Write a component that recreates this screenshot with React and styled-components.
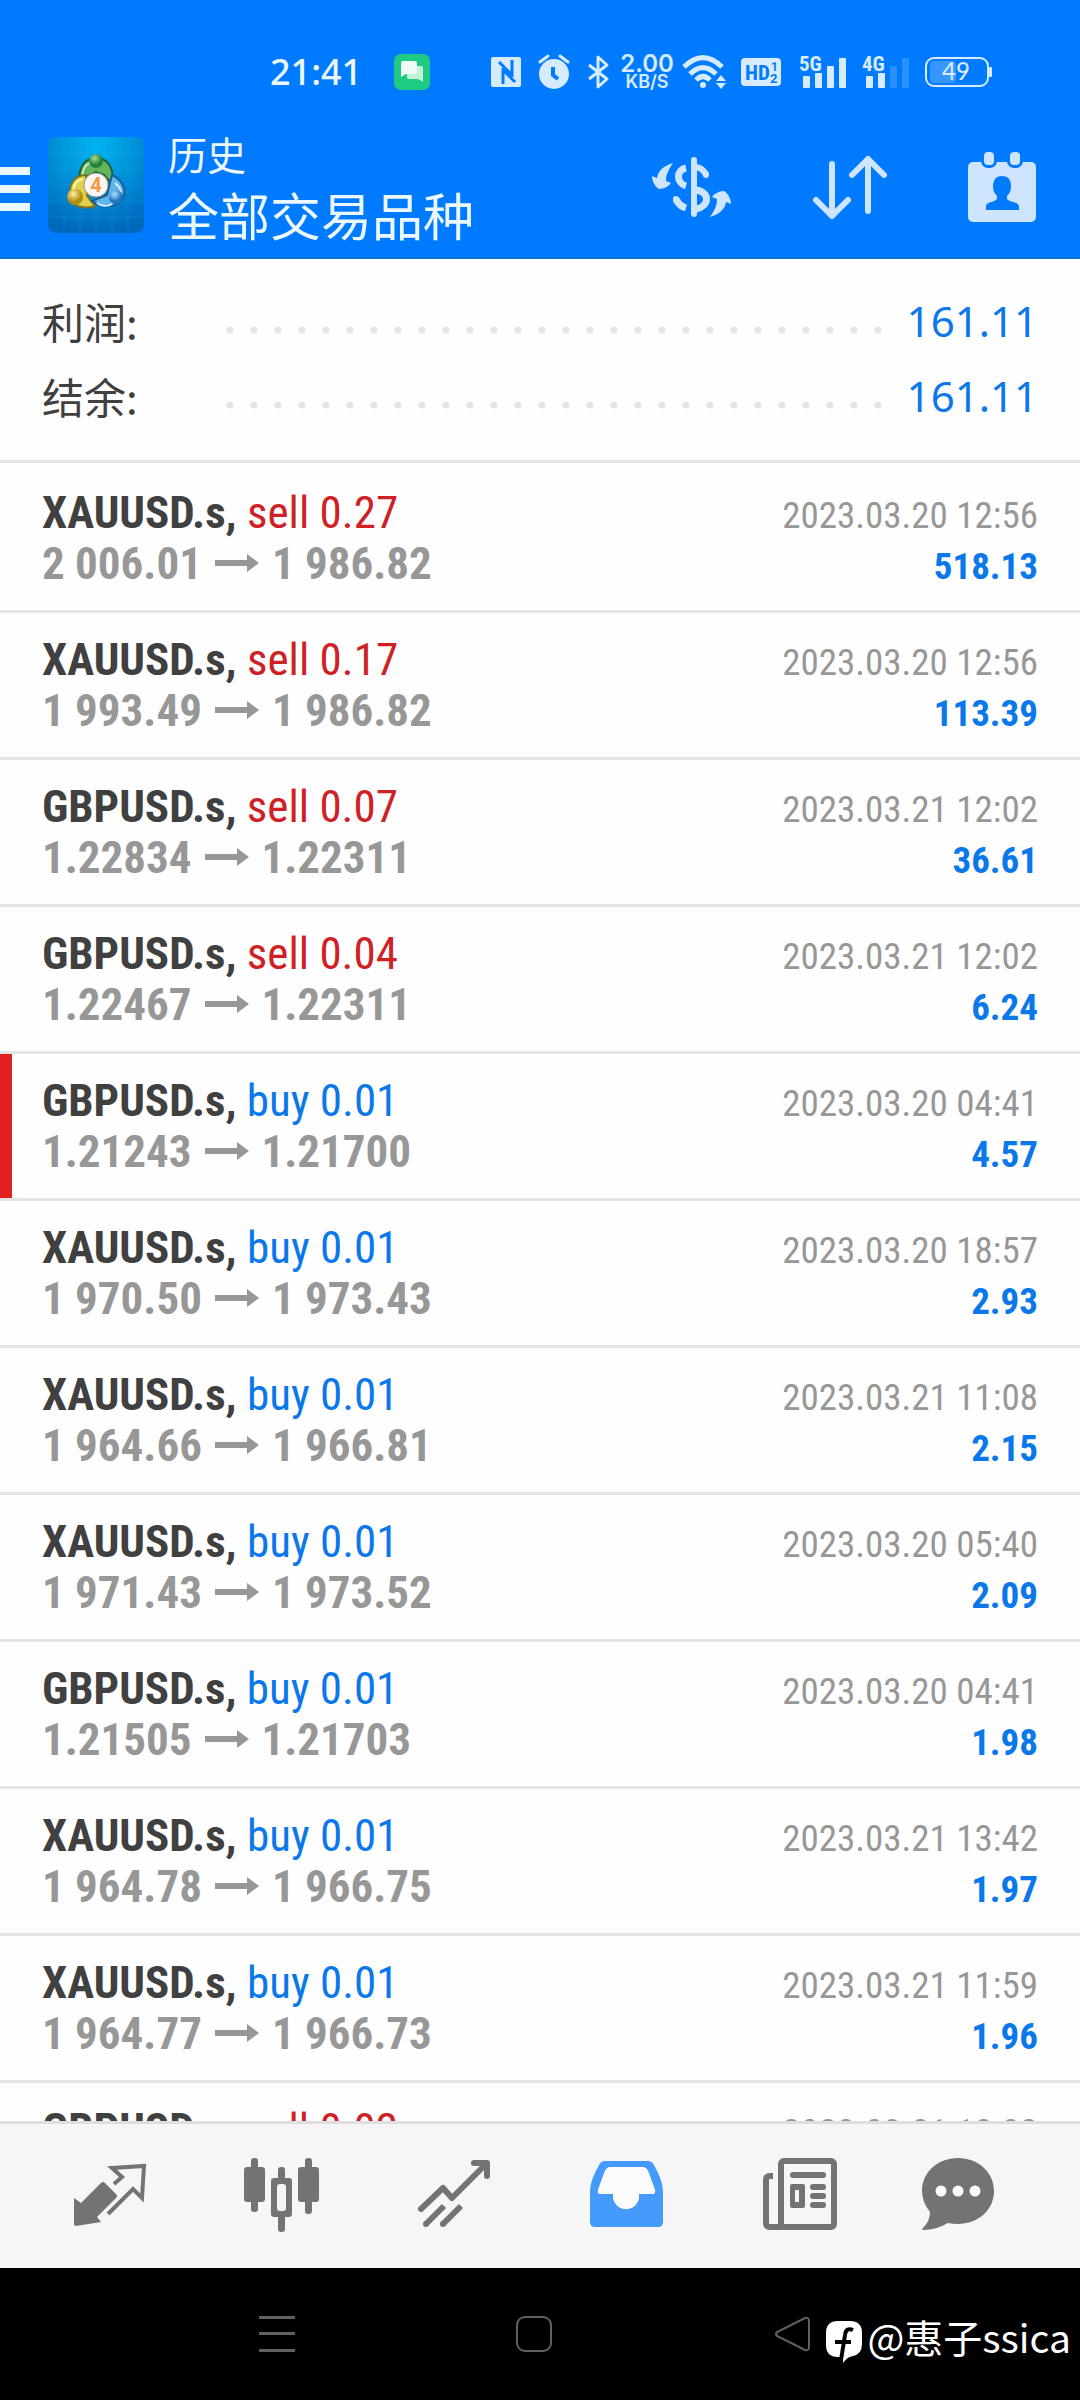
import React from 'react';
import styled, { createGlobalStyle } from 'styled-components';

const colors = {
  bar: '#007aff',
  icon: '#cfe4ff',
  buy: '#0a78ea',
  sell: '#cf2026',
  dark: '#404040',
  grey: '#979797',
  line: '#e4e4e4',
  tab: '#737373',
};

const deals = [
  { symbol: 'XAUUSD.s', side: 'sell', volume: '0.27', open: '2 006.01', close: '1 986.82', time: '2023.03.20 12:56', profit: '518.13' },
  { symbol: 'XAUUSD.s', side: 'sell', volume: '0.17', open: '1 993.49', close: '1 986.82', time: '2023.03.20 12:56', profit: '113.39' },
  { symbol: 'GBPUSD.s', side: 'sell', volume: '0.07', open: '1.22834', close: '1.22311', time: '2023.03.21 12:02', profit: '36.61' },
  { symbol: 'GBPUSD.s', side: 'sell', volume: '0.04', open: '1.22467', close: '1.22311', time: '2023.03.21 12:02', profit: '6.24' },
  { symbol: 'GBPUSD.s', side: 'buy', volume: '0.01', open: '1.21243', close: '1.21700', time: '2023.03.20 04:41', profit: '4.57', marked: true },
  { symbol: 'XAUUSD.s', side: 'buy', volume: '0.01', open: '1 970.50', close: '1 973.43', time: '2023.03.20 18:57', profit: '2.93' },
  { symbol: 'XAUUSD.s', side: 'buy', volume: '0.01', open: '1 964.66', close: '1 966.81', time: '2023.03.21 11:08', profit: '2.15' },
  { symbol: 'XAUUSD.s', side: 'buy', volume: '0.01', open: '1 971.43', close: '1 973.52', time: '2023.03.20 05:40', profit: '2.09' },
  { symbol: 'GBPUSD.s', side: 'buy', volume: '0.01', open: '1.21505', close: '1.21703', time: '2023.03.20 04:41', profit: '1.98' },
  { symbol: 'XAUUSD.s', side: 'buy', volume: '0.01', open: '1 964.78', close: '1 966.75', time: '2023.03.21 13:42', profit: '1.97' },
  { symbol: 'XAUUSD.s', side: 'buy', volume: '0.01', open: '1 964.77', close: '1 966.73', time: '2023.03.21 11:59', profit: '1.96' },
  { symbol: 'GBPUSD.s', side: 'sell', volume: '0.02', open: '1.22401', close: '1.22303', time: '2023.03.21 12:02', profit: '1.96' },
];

const totals = [
  { label: '利润:', value: '161.11' },
  { label: '结余:', value: '161.11' },
];

const Icon = ({ w, h, children }) => (
  <Svg width={w} height={h} viewBox={`0 0 ${w} ${h}`} fill='currentColor' aria-hidden='true'>
    {children}
  </Svg>
);

const ChatBadge = () => (
  <Icon w={36} h={36}>
    <rect width='36' height='36' rx='7' fill='#1fcb80' />
    <path d='M13 12h14a2 2 0 0 1 2 2v14l-5-3H15a2 2 0 0 1-2-2z' fill='#c4f2dc' />
    <path d='M9 7h12a2 2 0 0 1 2 2v9a2 2 0 0 1-2 2H12l-5 3V9a2 2 0 0 1 2-2z' fill='#eefcf5' />
  </Icon>
);

const Nfc = () => (
  <Icon w={37} h={32}>
    <rect y='1' width='30' height='30' rx='2' />
    <path d='M12 28V12M8 6l13 13M21 4v17M12 14l12 12' fill='none' stroke={colors.bar} strokeWidth='3' />
  </Icon>
);

const Alarm = () => (
  <Icon w={40} h={34}>
    <circle cx='16' cy='19' r='15' />
    <path d='M2 7l8-6M30 7l-8-6' stroke='currentColor' strokeWidth='3' strokeLinecap='round' />
    <path d='M15 12v8l5 4' fill='none' stroke={colors.bar} strokeWidth='4' />
  </Icon>
);

const Bluetooth = () => (
  <Icon w={24} h={34}>
    <path d='M1 10l18 14-9 8V2l9 8L1 24' fill='none' stroke='currentColor' strokeWidth='3' strokeLinejoin='round' />
  </Icon>
);

const Wifi = () => (
  <Icon w={49} h={36}>
    <g fill='none' stroke='currentColor' strokeWidth='5'>
      <path d='M2 13Q21-6 40 13' />
      <path d='M8 20Q21 7 34 20' />
      <path d='M14 26Q21 19 28 26' />
    </g>
    <circle cx='21' cy='31' r='3' />
    <path d='M34 27l5-6 5 6zM34 29l5 6 5-6z' />
  </Icon>
);

const Hd = () => (
  <Icon w={49} h={30}>
    <rect y='1' width='40' height='28' rx='4' />
    <g fill={colors.bar} fontFamily='Roboto, sans-serif' fontWeight='700'>
      <text x='4' y='23' fontSize='21' fontFamily='"Roboto Condensed", Roboto, sans-serif'>HD</text>
      <text x='30' y='14' fontSize='12'>1</text>
      <text x='29' y='26' fontSize='13'>2</text>
    </g>
  </Icon>
);

const Signal = ({ w, label, bars }) => (
  <Icon w={w} h={34}>
    <text x='-1' y='16' fontSize='21' fontWeight='700' fontFamily='"Roboto Condensed", Roboto, sans-serif'>{label}</text>
    {[12, 15, 22, 30].map((size, index) => (
      <rect key={size} x={3 + index * 12} y={33 - size} width='7' height={size} rx='1' opacity={index < bars ? 1 : .2} />
    ))}
  </Icon>
);

const Battery = () => (
  <Icon w={67} h={32}>
    <rect x='5' y='5' width='26' height='22' rx='4' opacity='.25' />
    <rect x='1' y='2' width='62' height='28' rx='8' fill='none' stroke='currentColor' strokeWidth='2' />
    <rect x='64' y='11' width='3' height='10' rx='1' />
    <text x='31' y='24' fontSize='24' fontWeight='500' textAnchor='middle' fontFamily='Lato, sans-serif'>49</text>
  </Icon>
);

const AppLogo = () => (
  <Icon w={96} h={96}>
    <defs>
      <radialGradient id='sky' cx='.5' cy='.1' r='.9'>
        <stop offset='0' stopColor='#00b4f0' />
        <stop offset='1' stopColor='#0068bd' />
      </radialGradient>
      <radialGradient id='green' cx='.4' cy='.3'>
        <stop offset='0' stopColor='#a5dc95' />
        <stop offset='1' stopColor='#23803a' />
      </radialGradient>
      <radialGradient id='gold' cx='.4' cy='.3'>
        <stop offset='0' stopColor='#fff0a0' />
        <stop offset='1' stopColor='#b08d10' />
      </radialGradient>
      <radialGradient id='blue' cx='.4' cy='.3'>
        <stop offset='0' stopColor='#b5e2fb' />
        <stop offset='1' stopColor='#1b74bd' />
      </radialGradient>
    </defs>
    <rect width='96' height='96' rx='8' fill='url(#sky)' />
    <path d='M16 0v96M32 0v96M48 0v96M64 0v96M80 0v96M0 16h96M0 32h96M0 48h96M0 64h96M0 80h96' stroke='#35b8ee' strokeOpacity='.2' />
    <path d='M32 47C29 29 38 21 48 21s19 8 16 26l-8-9-8-3-8 4z' fill='#64b35d' stroke='#1f6038' strokeWidth='2' />
    <path d='M35 42C33 31 39 25 48 25' fill='none' stroke='#c4ebba' strokeWidth='2' />
    <path d='M38 38c-11 0-17 9-16 19 1 12 12 16 25 12l-8-10z' fill='#dfd04a' stroke='#7d7420' strokeWidth='2' />
    <path d='M26 56c-2-8 3-13 9-14' fill='none' stroke='#fff8b5' strokeWidth='2' />
    <path d='M64 38c9 4 14 13 12 20-3 12-20 15-32 6l15-6z' fill='#60b5ea' stroke='#175d96' strokeWidth='2' />
    <path d='M67 46c5 4 7 9 5 13M49 66c4 3 10 4 15 1' fill='none' stroke='#d2effd' strokeWidth='2' />
    <circle cx='48' cy='24' r='7' fill='url(#green)' />
    <circle cx='27' cy='60' r='8' fill='url(#gold)' />
    <circle cx='68' cy='60' r='7' fill='url(#blue)' />
    <circle cx='48' cy='48' r='12' fill='#fbf6f2' stroke='#9a9a8c' />
    <text x='48' y='55' fontSize='20' fontWeight='700' textAnchor='middle' fill='#f2994c' fontFamily='Roboto, sans-serif'>4</text>
  </Icon>
);

const Currency = () => (
  <Icon w={80} h={64}>
    <g fill='none' stroke='currentColor' strokeWidth='6'>
      <path d='M42 5v54' strokeLinecap='round' />
      <path d='M34 13C24 15 24 28 34 31' strokeWidth='7' />
      <path d='M44 12q7 1 10 8' />
      <path d='M44 35C58 37 58 51 44 54' strokeWidth='7' />
      <path d='M34 53q-7-2-10-9' strokeWidth='7' />
      <path d='M54 19v1M24 44v1' strokeLinecap='round' />
    </g>
    <path id='swap' d='M21 8C11 11 6 16 5 23L0 21C0 26 3 32 7 34C12 34 17 31 19 28L14 26C14 19 17 14 21 8Z' />
    <use href='#swap' transform='rotate(180 39.5 35)' />
  </Icon>
);

const Sort = () => (
  <Icon w={76} h={64}>
    <path d='M20 9v51M4 45l16 16 16-16M56 56V4M40 20L56 4l16 16' fill='none' stroke='currentColor' strokeWidth='6' strokeLinecap='round' strokeLinejoin='round' />
  </Icon>
);

const Calendar = () => (
  <Icon w={68} h={70}>
    <rect y='10' width='68' height='60' rx='5' />
    <rect x='13' y='-4' width='16' height='20' rx='7' fill={colors.bar} />
    <rect x='39' y='-4' width='16' height='20' rx='7' fill={colors.bar} />
    <rect x='16' y='0' width='10' height='13' rx='4' />
    <rect x='42' y='0' width='10' height='13' rx='4' />
    <path d='M34 24c6 0 9 4 9 10 0 4-1 7-4 10v3c3 4 12 2 12 8v3H18v-3c0-6 8-4 11-8v-3c-3-3-4-6-4-10 0-6 3-10 9-10z' fill={colors.bar} />
  </Icon>
);

const Quotes = () => (
  <Icon w={80} h={80}>
    <path d='M44 28l8-7-10-9 32-2-2 32-9-9-25 25' fill='none' stroke='currentColor' strokeWidth='4' />
    <path d='M4 42l7 5 20-20q2-2 4 0l11 11q2 2 0 4L27 61l4 5-25 4q-2 0-2-2z' />
  </Icon>
);

const Charts = () => (
  <Icon w={80} h={80}>
    <rect x='2' y='11' width='21' height='35' rx='3' />
    <rect x='9' y='2' width='7' height='54' rx='3' />
    <rect x='56' y='11' width='21' height='35' rx='3' />
    <rect x='63' y='2' width='7' height='56' rx='3' />
    <rect x='36' y='11' width='7' height='65' rx='3' />
    <rect x='29' y='22' width='21' height='39' rx='3' />
    <rect x='35' y='28' width='9' height='27' rx='3' fill='#f6f6f6' />
  </Icon>
);

const Trade = () => (
  <Icon w={80} h={80}>
    <g fill='none' stroke='currentColor' strokeWidth='6' strokeLinejoin='round'>
      <path d='M7 53l22-21 9 10L72 8M60 7h13v13' strokeLinecap='round' />
      <path d='M12 68l18-18M29 68l18-18' />
      <path d='M12 68h0M29 68h0' strokeLinecap='round' />
    </g>
  </Icon>
);

const History = () => (
  <Icon w={80} h={80}>
    <path fillRule='evenodd' d='M19 5h43q4 0 6 4c5 9 9 18 9 27v30q0 5-5 5H9q-5 0-5-5V36c0-9 4-18 9-27q2-4 6-4zM25 11q-4 0-6 4l-7 19q-1 4 3 4h12v2a13 13 0 0 0 26 0v-2h13q4 0 3-4l-7-19q-2-4-6-4z' />
    <path d='M25 11q-4 0-6 4l-7 19q-1 4 3 4h12v2a13 13 0 0 0 26 0v-2h13q4 0 3-4l-7-19q-2-4-6-4z' fill='#fbfbfb' />
  </Icon>
);

const News = () => (
  <Icon w={80} h={80}>
    <g fill='none' stroke='currentColor' strokeWidth='6'>
      <rect x='23' y='5' width='53' height='66' rx='3' />
      <path d='M15 20h-3q-4 0-4 4v43q0 4 4 4h12' />
    </g>
    <rect x='32' y='16' width='36' height='6' rx='3' />
    <path fillRule='evenodd' d='M34 28h11q2 0 2 2v20q0 2-2 2H34q-2 0-2-2V30q0-2 2-2zM37 34v12h4V34z' />
    <rect x='52' y='28' width='16' height='6' rx='3' />
    <rect x='52' y='37' width='16' height='6' rx='3' />
    <rect x='52' y='46' width='16' height='6' rx='3' />
  </Icon>
);

const Messages = () => (
  <Icon w={80} h={80}>
    <path d='M40 2c20 0 36 14 36 33S60 68 40 68q-5 0-10-1-12 7-24 7-3 0-1-2 7-7 7-16Q4 46 4 35C4 16 20 2 40 2z' />
    <g fill='#fbfbfb'>
      <circle cx='23' cy='35' r='5.5' />
      <circle cx='40' cy='35' r='5.5' />
      <circle cx='57' cy='35' r='5.5' />
    </g>
  </Icon>
);

const tabs = [
  { label: '行情', icon: Quotes },
  { label: '图表', icon: Charts },
  { label: '交易', icon: Trade },
  { label: '历史', icon: History, active: true },
  { label: '新闻', icon: News },
  { label: '信息', icon: Messages },
];

const StatusBar = () => (
  <StatusRow>
    <Clock>21:41</Clock>
    <ChatBadge />
    <StatusIcons>
      <Nfc />
      <Alarm />
      <Bluetooth />
      <NetSpeed>
        <Speed>2.00</Speed>
        <Unit>KB/S</Unit>
      </NetSpeed>
      <Wifi />
      <Hd />
      <Signal w={53} label='5G' bars={4} />
      <Signal w={52} label='4G' bars={2} />
      <Battery />
    </StatusIcons>
  </StatusRow>
);

const Deal = ({ symbol, side, volume, open, close, time, profit, marked }) => (
  <DealRow $marked={marked}>
    <Line>
      <Symbol>{symbol}, <Side $side={side}>{side} {volume}</Side></Symbol>
      <Time>{time}</Time>
    </Line>
    <Line>
      <Prices>
        {open}
        <Arrow width='44' height='18' viewBox='0 0 44 18' aria-label='→'>
          <path d='M0 6h32V0l12 9-12 9v-6H0z' fill='currentColor' />
        </Arrow>
        {close}
      </Prices>
      <Profit>{profit}</Profit>
    </Line>
  </DealRow>
);

const App = () => {
  return (
    <Screen>
      <GlobalStyle />
      <Header>
        <StatusBar />
        <AppBar>
          <MenuButton aria-label='菜单'>
            <Icon w={30} h={44}>
              <path d='M0 0h30v8H0zM0 18h30v8H0zM0 36h30v8H0z' />
            </Icon>
          </MenuButton>
          <AppLogo />
          <Titles>
            <Subtitle>历史</Subtitle>
            <Title>全部交易品种</Title>
          </Titles>
          <Actions>
            <IconButton aria-label='货币'><Currency /></IconButton>
            <IconButton aria-label='排序'><Sort /></IconButton>
            <IconButton aria-label='日期'><Calendar /></IconButton>
          </Actions>
        </AppBar>
      </Header>
      <Summary>
        {totals.map(({ label, value }) => (
          <Total key={label}>
            <Label>{label}</Label>
            <Leader />
            <Value>{value}</Value>
          </Total>
        ))}
      </Summary>
      <Deals>
        {deals.map((deal, index) => <Deal key={index} {...deal} />)}
      </Deals>
      <TabBar>
        {tabs.map(({ label, icon: TabIcon, active }) => (
          <Tab key={label} aria-label={label} $active={active}><TabIcon /></Tab>
        ))}
      </TabBar>
      <SystemBar>
        <SystemButton aria-label='最近任务'>
          <Icon w={36} h={36}><path d='M0 0h36v3H0zM0 16h36v3H0zM0 33h36v3H0z' /></Icon>
        </SystemButton>
        <SystemButton aria-label='主屏幕'>
          <Icon w={36} h={36}>
            <rect x='1' y='1' width='34' height='34' rx='8' fill='none' stroke='currentColor' strokeWidth='2' />
          </Icon>
        </SystemButton>
        <SystemButton aria-label='返回'>
          <Icon w={36} h={36}>
            <path d='M31 2L3 16q-2 2 0 4l28 14q4 1 4-3V5q0-4-4-3z' fill='none' stroke='currentColor' strokeWidth='2' />
          </Icon>
        </SystemButton>
        <Watermark>
          <Icon w={38} h={44}>
            <path d='M13 1h12q12 0 12 12v11q0 10-9 12-6 1-10 7v-6h-5Q1 37 1 25V13Q1 1 13 1z' />
            <path d='M28 10q-7-3-8 5l-4 25M10 22h16' fill='none' stroke='#000' strokeWidth='4' />
          </Icon>
          <Handle>@惠子ssica</Handle>
        </Watermark>
      </SystemBar>
    </Screen>
  );
};

const GlobalStyle = createGlobalStyle`
  * {
    box-sizing: border-box;
  }

  body {
    margin: 0;
    font-family: 'Noto Sans', 'Noto Sans CJK SC', sans-serif;
  }
`;

const Screen = styled.div`
  height: 100vh;
  display: flex;
  flex-direction: column;
  background-color: #fefefe;
`;

const Svg = styled.svg`
  display: block;
  flex-shrink: 0;
  overflow: visible;
`;

const Header = styled.header`
  color: #ecf8ff;
  background-color: ${colors.bar};
  border-bottom: 2px solid #0c70d8;
`;

const StatusRow = styled.div`
  height: 112px;
  padding: 32px 88px 0 270px;
  display: flex;
  align-items: center;
  gap: 32px;
`;

const Clock = styled.span`
  font-size: 36px;
  line-height: 40px;
  font-weight: 500;
`;

const StatusIcons = styled.div`
  margin-left: auto;
  display: flex;
  align-items: center;
  gap: 10px;
  color: #d6ebff;
`;

const NetSpeed = styled.div`
  width: 50px;
  display: flex;
  flex-direction: column;
  align-items: center;
  font-family: Inter, Roboto, sans-serif;
  font-weight: 600;
`;

const Speed = styled.span`
  font-size: 24px;
  line-height: 20px;
`;

const Unit = styled.span`
  font-size: 18px;
  line-height: 16px;
`;

const AppBar = styled.div`
  height: 145px;
  padding-right: 44px;
  display: flex;
  align-items: center;
`;

const IconButton = styled.button`
  padding: 0;
  border: 0;
  background: none;
  color: ${colors.icon};
`;

const MenuButton = styled(IconButton)`
  margin-right: 18px;
  padding-top: 8px;
  color: #ecf8ff;
`;

const Titles = styled.div`
  margin-left: 24px;
  font-family: 'Noto Sans CJK SC', sans-serif;
`;

const Subtitle = styled.p`
  margin: 0;
  font-size: 39px;
  line-height: 58px;
`;

const Title = styled.h1`
  margin: 0;
  font-size: 51px;
  line-height: 64px;
  font-weight: 400;
`;

const Actions = styled.div`
  margin-left: auto;
  padding-top: 4px;
  display: flex;
  align-items: center;
  gap: 80px;
`;

const Summary = styled.section`
  padding: 24px 42px 27px;
  border-bottom: 3px solid ${colors.line};
`;

const Total = styled.div`
  height: 75px;
  display: flex;
  align-items: center;
  font-size: 42px;
  line-height: 75px;
`;

const Label = styled.span`
  width: 176px;
  font-family: 'Noto Sans CJK SC', sans-serif;
  color: ${colors.dark};
`;

const Leader = styled.span`
  height: 8px;
  margin: 18px 15px 0 0;
  flex: 1;
  background: radial-gradient(circle, ${colors.line} 3px, transparent 4px) 0 0 / 24px 8px;
`;

const Value = styled.span`
  color: ${colors.buy};
`;

const Deals = styled.ul`
  margin: 0;
  padding: 3px 0 0;
  flex: 1;
  min-height: 0;
  overflow: hidden;
  list-style: none;
`;

const DealRow = styled.li`
  padding: 21px 42px;
  border-bottom: 3px solid ${colors.line};
  box-shadow: ${props => props.$marked ? 'inset 12px 0 #e21f1f' : 'none'};
  font-family: 'Roboto Condensed', 'Liberation Sans Narrow', Roboto, sans-serif;
  font-size: 45px;
  line-height: 51px;
`;

const Line = styled.div`
  height: 51px;
  display: flex;
  align-items: baseline;
  justify-content: space-between;
`;

const Symbol = styled.span`
  font-weight: 700;
  color: ${colors.dark};
`;

const Side = styled.span`
  font-weight: 400;
  color: ${props => props.$side === 'sell' ? colors.sell : colors.buy};
`;

const Prices = styled.span`
  font-weight: 700;
  color: ${colors.grey};
`;

const Arrow = styled.svg`
  margin: 0 13px 7px;
`;

const Time = styled.time`
  font-size: 37px;
  color: ${colors.grey};
`;

const Profit = styled.span`
  font-size: 37px;
  font-weight: 700;
  color: ${colors.buy};
`;

const TabBar = styled.nav`
  height: 147px;
  padding: 0 48px 0 24px;
  display: grid;
  grid-template-columns: repeat(5, 172fr) 148fr;
  background-color: #f6f6f6;
  border-top: 3px solid #dedede;
`;

const Tab = styled(IconButton)`
  display: flex;
  align-items: center;
  justify-content: center;
  color: ${props => props.$active ? '#449bfb' : colors.tab};
`;

const SystemBar = styled.div`
  position: relative;
  height: 132px;
  padding: 0 159px 0 148px;
  display: grid;
  grid-template-columns: repeat(3, 1fr);
  background-color: #000;
`;

const SystemButton = styled(IconButton)`
  display: flex;
  align-items: center;
  justify-content: center;
  color: #606060;
`;

const Watermark = styled.div`
  position: absolute;
  right: 9px;
  bottom: 36px;
  display: flex;
  align-items: flex-end;
  gap: 4px;
  color: #fff;
`;

const Handle = styled.span`
  padding-bottom: 4px;
  font-family: 'Noto Sans CJK SC', sans-serif;
  font-size: 39px;
  line-height: 48px;
`;

export default App;
